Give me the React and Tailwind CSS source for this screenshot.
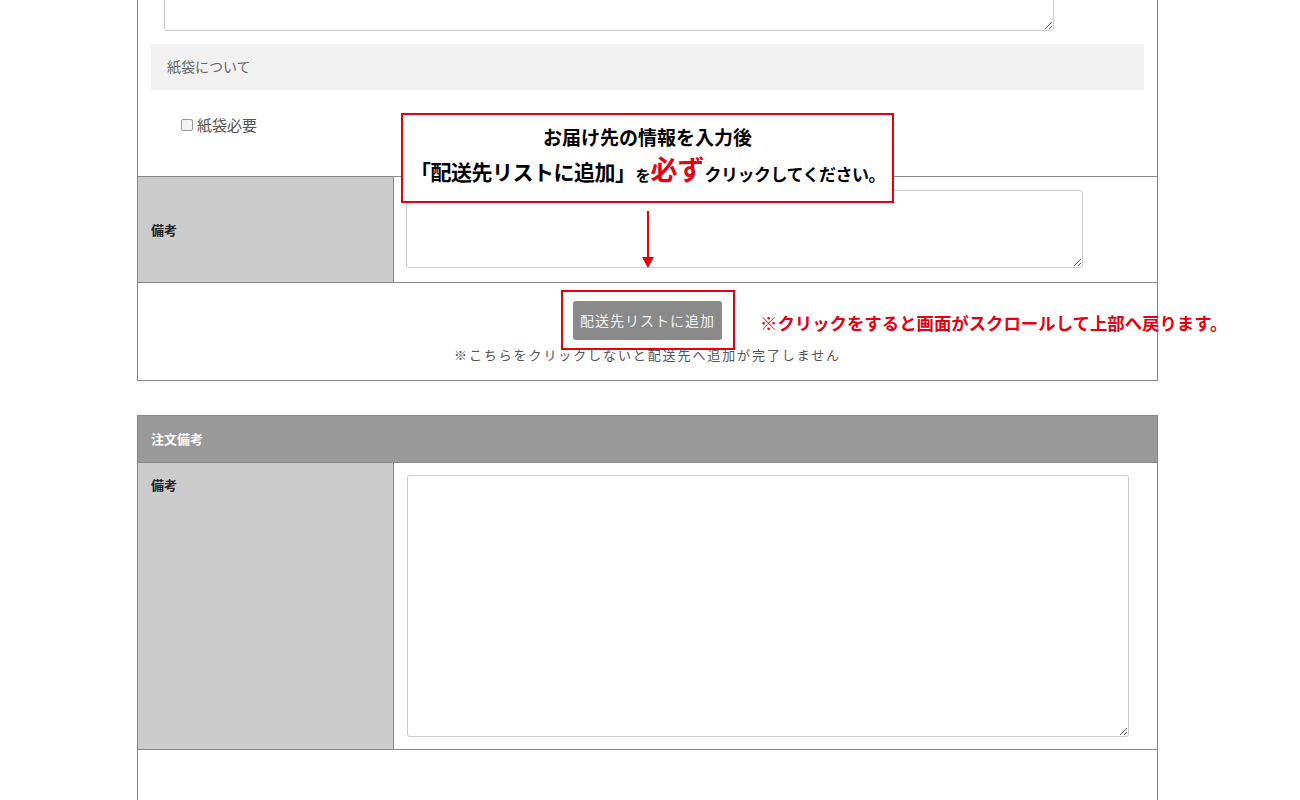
import React from "react";

const RED = "#e60012";

const App = () => {
  return (
    <div className="relative w-[1300px] h-[800px] overflow-hidden bg-white font-['Noto_Sans_CJK_JP','Noto_Sans',sans-serif] text-[#333]">
      {/* first box: delivery form tail */}
      <div className="-mt-[49px] ml-[137px] w-[1021px] border-x border-b border-[#888]">
        <div className="h-[225px]">
          <div className="pl-[26px]">
            <textarea className="block w-[890px] h-[80px] border border-[#ccc] rounded-[3px] resize-y bg-white" />
          </div>
          <div className="mx-[13px] mt-[13px] h-[46px] bg-[#f1f1f1] flex items-center pl-[16px] pb-[2px] text-[14px] text-[#666]">
            紙袋について
          </div>
          <div className="mt-[25px] pl-[43px] flex items-center gap-[4px] h-[20px] text-[15px] text-[#555]">
            <span className="w-[12px] h-[12px] border border-[#999] rounded-[2px] bg-[#f3f3f3]" />
            紙袋必要
          </div>
        </div>
        <div className="flex border-t border-[#888] h-[106px]">
          <div className="w-[256px] shrink-0 bg-[#ccc] border-r border-[#888] flex items-center pl-[13px] text-[13px] font-bold text-[#222]">
            備考
          </div>
          <div className="pl-[12px] pt-[13px]">
            <textarea className="block w-[677px] h-[78px] border border-[#ccc] rounded-[3px] bg-white" />
          </div>
        </div>
        <div className="border-t border-[#888] h-[98px] flex flex-col items-center pt-[18px]">
          <button className="w-[149px] h-[39px] bg-[#8a8a8a] rounded-[3px] text-[14px] text-[#f2f2f2] tracking-[1px]">
            配送先リストに追加
          </button>
          <p className="mt-[5px] text-[13px] leading-[20px] text-[#555] tracking-[1.9px]">
            ※こちらをクリックしないと配送先へ追加が完了しません
          </p>
        </div>
      </div>

      {/* order note box */}
      <div className="mt-[34px] ml-[137px] w-[1021px] border border-[#888]">
        <div className="h-[46px] bg-[#999] flex items-center pl-[13px] text-[13px] font-bold text-white">
          注文備考
        </div>
        <div className="flex border-t border-[#888] h-[288px] border-b">
          <div className="w-[256px] shrink-0 bg-[#ccc] border-r border-[#888] pl-[13px] pt-[12px] text-[13px] font-bold text-[#222] leading-[20px]">
            備考
          </div>
          <div className="pl-[13px] pt-[12px]">
            <textarea className="block w-[722px] h-[262px] border border-[#ccc] rounded-[3px] bg-white" />
          </div>
        </div>
        <div className="h-[100px]" />
      </div>

      {/* annotations */}
      <div className="absolute left-[401px] top-[113px] w-[493px] h-[90px] border-2 border-[#e60012] bg-white flex flex-col items-center justify-center font-bold text-black leading-none">
        <div className="text-[19px] -mt-[8px]">お届け先の情報を入力後</div>
        <div className="mt-[9px] flex items-end whitespace-nowrap">
          <span className="text-[21px] tracking-[-0.5px]">「配送先リストに追加」</span>
          <span className="text-[15px]">を</span>
          <span className="text-[27px] text-[#e60012]">必ず</span>
          <span className="text-[17px] tracking-[-0.5px]">クリックしてください。</span>
        </div>
      </div>

      <svg className="absolute left-[640px] top-[211px]" width="16" height="58" viewBox="0 0 16 58">
        <line x1="8" y1="0" x2="8" y2="48" stroke={RED} strokeWidth="2" />
        <polygon points="2,46 14,46 8,57" fill={RED} />
      </svg>

      <div className="absolute left-[561px] top-[290px] w-[174px] h-[60px] border-2 border-[#e60012]" />

      <div className="absolute left-[760px] top-[312px] text-[17.4px] font-bold text-[#e60012] whitespace-nowrap leading-[22px]">
        ※クリックをすると画面がスクロールして上部へ戻ります。
      </div>
    </div>
  );
};

export default App;
